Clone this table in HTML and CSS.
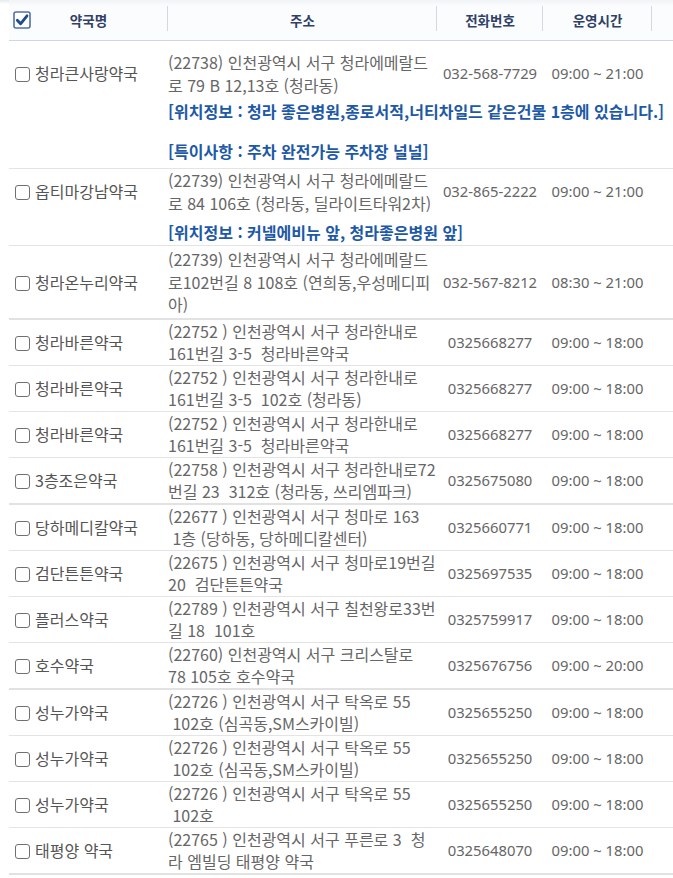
FILE: index.html
```html
<!DOCTYPE html>
<html lang="ko">
<head>
    <meta charset="UTF-8">
    <title>약국 목록</title>
    <link rel="stylesheet" href="styles.css">
</head>
<body>
    <table class="list">
        <colgroup>
            <col class="c-name">
            <col class="c-addr">
            <col class="c-tel">
            <col class="c-time">
            <col class="c-etc">
        </colgroup>
        <thead>
            <tr>
                <th>
                    <div class="th-name">
                        <svg class="chk-all" width="18" height="18" viewBox="0 0 18 18">
                            <rect x="1" y="1" width="16" height="16" rx="2" fill="#fff" stroke="#5270a8" stroke-width="1.6"/>
                            <path d="M4.3 9.2 L7.6 12.8 L14 4.8" fill="none" stroke="#1f4a8c" stroke-width="2.8" stroke-linecap="round" stroke-linejoin="round"/>
                        </svg>
                        <span>약국명</span>
                    </div>
                </th>
                <th>주소</th>
                <th>전화번호</th>
                <th>운영시간</th>
                <th class="th-etc"></th>
            </tr>
        </thead>
        <tbody>
            <!-- 청라큰사랑약국 -->
            <tr class="first">
                <td class="name"><span class="chk"></span>청라큰사랑약국</td>
                <td class="addr">(22738) 인천광역시 서구 청라에메랄드<br>로 79 B 12,13호 (청라동)</td>
                <td class="tel">032-568-7729</td>
                <td class="time">09:00 ~ 21:00</td>
                <td></td>
            </tr>
            <tr class="row">
                <td></td>
                <td class="info" colspan="4">[위치정보 : 청라 좋은병원,종로서적,너티차일드 같은건물 1층에 있습니다.]<br><br>[특이사항 : 주차 완전가능 주차장 널널]</td>
            </tr>
            <!-- 옵티마강남약국 -->
            <tr>
                <td class="name"><span class="chk"></span>옵티마강남약국</td>
                <td class="addr">(22739) 인천광역시 서구 청라에메랄드<br>로 84 106호 (청라동, 딜라이트타워2차)</td>
                <td class="tel">032-865-2222</td>
                <td class="time">09:00 ~ 21:00</td>
                <td></td>
            </tr>
            <tr class="row">
                <td></td>
                <td class="info info-2" colspan="4">[위치정보 : 커넬에비뉴 앞, 청라좋은병원 앞]</td>
            </tr>
            <tr class="row thick">
                <td class="name"><span class="chk"></span>청라온누리약국</td>
                <td class="addr addr-3">(22739) 인천광역시 서구 청라에메랄드<br>로102번길 8 108호 (연희동,우성메디피<br>아)</td>
                <td class="tel">032-567-8212</td>
                <td class="time">08:30 ~ 21:00</td>
                <td></td>
            </tr>
            <tr class="row">
                <td class="name"><span class="chk"></span>청라바른약국</td>
                <td class="addr">(22752 ) 인천광역시 서구 청라한내로<br>161번길 3-5 &nbsp;청라바른약국</td>
                <td class="tel">0325668277</td>
                <td class="time">09:00 ~ 18:00</td>
                <td></td>
            </tr>
            <tr class="row">
                <td class="name"><span class="chk"></span>청라바른약국</td>
                <td class="addr">(22752 ) 인천광역시 서구 청라한내로<br>161번길 3-5 &nbsp;102호 (청라동)</td>
                <td class="tel">0325668277</td>
                <td class="time">09:00 ~ 18:00</td>
                <td></td>
            </tr>
            <tr class="row">
                <td class="name"><span class="chk"></span>청라바른약국</td>
                <td class="addr">(22752 ) 인천광역시 서구 청라한내로<br>161번길 3-5 &nbsp;청라바른약국</td>
                <td class="tel">0325668277</td>
                <td class="time">09:00 ~ 18:00</td>
                <td></td>
            </tr>
            <tr class="row thick">
                <td class="name"><span class="chk"></span>3층조은약국</td>
                <td class="addr">(22758 ) 인천광역시 서구 청라한내로72<br>번길 23 &nbsp;312호 (청라동, 쓰리엠파크)</td>
                <td class="tel">0325675080</td>
                <td class="time">09:00 ~ 18:00</td>
                <td></td>
            </tr>
            <tr class="row">
                <td class="name"><span class="chk"></span>당하메디칼약국</td>
                <td class="addr">(22677 ) 인천광역시 서구 청마로 163<br>&nbsp;1층 (당하동, 당하메디칼센터)</td>
                <td class="tel">0325660771</td>
                <td class="time">09:00 ~ 18:00</td>
                <td></td>
            </tr>
            <tr class="row">
                <td class="name"><span class="chk"></span>검단튼튼약국</td>
                <td class="addr">(22675 ) 인천광역시 서구 청마로19번길<br>20 &nbsp;검단튼튼약국</td>
                <td class="tel">0325697535</td>
                <td class="time">09:00 ~ 18:00</td>
                <td></td>
            </tr>
            <tr class="row">
                <td class="name"><span class="chk"></span>플러스약국</td>
                <td class="addr">(22789 ) 인천광역시 서구 칠천왕로33번<br>길 18 &nbsp;101호</td>
                <td class="tel">0325759917</td>
                <td class="time">09:00 ~ 18:00</td>
                <td></td>
            </tr>
            <tr class="row thick">
                <td class="name"><span class="chk"></span>호수약국</td>
                <td class="addr">(22760) 인천광역시 서구 크리스탈로<br>78 105호 호수약국</td>
                <td class="tel">0325676756</td>
                <td class="time">09:00 ~ 20:00</td>
                <td></td>
            </tr>
            <tr class="row">
                <td class="name"><span class="chk"></span>성누가약국</td>
                <td class="addr">(22726 ) 인천광역시 서구 탁옥로 55<br>&nbsp;102호 (심곡동,SM스카이빌)</td>
                <td class="tel">0325655250</td>
                <td class="time">09:00 ~ 18:00</td>
                <td></td>
            </tr>
            <tr class="row">
                <td class="name"><span class="chk"></span>성누가약국</td>
                <td class="addr">(22726 ) 인천광역시 서구 탁옥로 55<br>&nbsp;102호 (심곡동,SM스카이빌)</td>
                <td class="tel">0325655250</td>
                <td class="time">09:00 ~ 18:00</td>
                <td></td>
            </tr>
            <tr class="row">
                <td class="name"><span class="chk"></span>성누가약국</td>
                <td class="addr">(22726 ) 인천광역시 서구 탁옥로 55<br>&nbsp;102호</td>
                <td class="tel">0325655250</td>
                <td class="time">09:00 ~ 18:00</td>
                <td></td>
            </tr>
            <tr class="row thick">
                <td class="name"><span class="chk"></span>태평양 약국</td>
                <td class="addr">(22765 ) 인천광역시 서구 푸른로 3 &nbsp;청<br>라 엠빌딩 태평양 약국</td>
                <td class="tel">0325648070</td>
                <td class="time">09:00 ~ 18:00</td>
                <td></td>
            </tr>
        </tbody>
    </table>
</body>
</html>
```

FILE: styles.css
```css
body {
    margin: 0;
    font-family: "Noto Sans CJK KR", sans-serif;
    font-size: 16px;
    color: #666;
    background: #fff linear-gradient(#e6e9ed, #fff 4px) no-repeat;
}
.list {
    margin-left: 9px;
    width: 664px;
    border-collapse: collapse;
    table-layout: fixed;
}
.c-name { width: 159px; }
.c-addr { width: 269px; }
.c-tel { width: 106px; }
.c-time { width: 109px; }
.c-etc { width: 21px; }

/* 헤더 */
.list thead tr {
    background: linear-gradient(#f1f3f6, #fbfcfd 6px, #fbfcfd);
}
.list th {
    height: 40px;
    padding: 0;
    border-bottom: 1px solid #cfd6e2;
    font-size: 13.5px;
    font-weight: bold;
    color: #2f4166;
    text-align: center;
    background: linear-gradient(#d4d9e1, #d4d9e1) right 6px / 1px 25px no-repeat;
}
.list th.th-etc {
    background: none;
}
.th-name {
    display: grid;
    grid-template-columns: 24px 1fr 24px;
    align-items: center;
}
.chk-all {
    display: block;
    margin-left: 4px;
}

/* 목록 */
.list td {
    padding: 0;
    line-height: 22.5px;
    vertical-align: middle;
}
.list tr.row {
    border-bottom: 1px solid #e4e4e4;
}
.list tr.thick {
    border-bottom: 2px solid #e2e2e2;
}
.list tr.first td {
    padding-top: 10px;
}
.name {
    padding-left: 6px !important;
    color: #555;
    white-space: nowrap;
}
.chk {
    display: inline-block;
    width: 15px;
    height: 15px;
    box-sizing: border-box;
    border: 1.4px solid #707070;
    border-radius: 3px;
    margin-right: 5px;
    vertical-align: -2px;
}
.addr {
    white-space: nowrap;
}
.addr-3 {
    padding: 2px 0 !important;
}
.tel,
.time {
    font-family: "Noto Sans", sans-serif;
    font-size: 14.8px;
    text-align: center;
    white-space: nowrap;
}
.info {
    padding: 5px 0 7px !important;
    line-height: 20px !important;
    color: #1d59a6;
    font-weight: bold;
    white-space: nowrap;
}
.info-2 {
    padding: 8px 0 3px !important;
}
```
